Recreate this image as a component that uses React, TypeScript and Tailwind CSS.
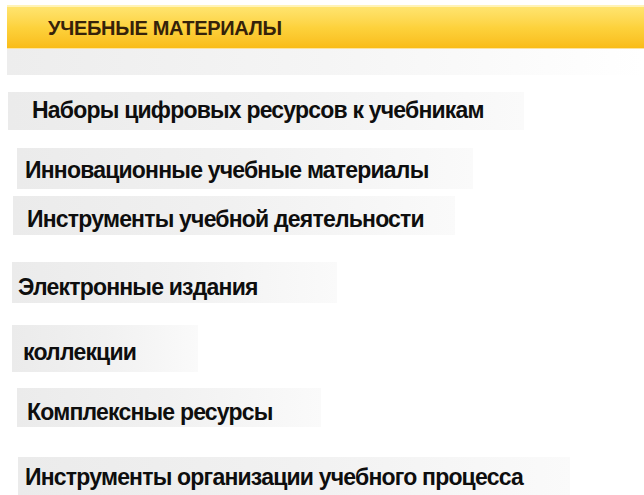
export default function App() {
  const items = [
    { text: "Наборы цифровых ресурсов к учебникам", box: "mt-[17px] ml-[8px] w-[516px] h-[38px] pt-[6px] pl-[24px]" },
    { text: "Инновационные учебные материалы", box: "mt-[18px] ml-[17px] w-[456px] h-[41px] pt-[10px] pl-[8px]" },
    { text: "Инструменты учебной деятельности", box: "mt-[7px] ml-[13px] w-[442px] h-[39px] pt-[11px] pl-[14px]" },
    { text: "Электронные издания", box: "mt-[27px] ml-[12px] w-[325px] h-[41px] pt-[13px] pl-[6px]" },
    { text: "коллекции", box: "mt-[22px] ml-[12px] w-[186px] h-[47px] pt-[15px] pl-[11px]" },
    { text: "Комплексные ресурсы", box: "mt-[16px] ml-[17px] w-[304px] h-[39px] pt-[12px] pl-[10px]" },
    { text: "Инструменты организации учебного процесса", box: "mt-[30px] ml-[18px] w-[552px] h-[38px] pt-[8px] pl-[7px]" },
  ];

  return (
    <div className="w-[644px] h-[495px] overflow-hidden bg-white font-['Liberation_Sans',Arial,sans-serif]">
      {/* section header bar */}
      <div className="pt-[5px] pl-[7px]">
        <div className="h-[2px] bg-[#fff3b8]" />
        <div className="h-[42px] pt-[10px] pl-[41px] bg-gradient-to-b from-[#ffe46e] via-[#fdd23c] to-[#f9bc16] border-b border-[#fde3a0]">
          <span className="block text-[20px] leading-[22px] font-bold text-[#35220a] tracking-[-0.3px]">
            УЧЕБНЫЕ МАТЕРИАЛЫ
          </span>
        </div>
        <div className="h-[26px] bg-gradient-to-r from-[#ededed] via-[#f5f5f5] to-white" />
      </div>

      {/* list of material groups */}
      <div className="flex flex-col">
        {items.map((it) => (
          <div
            key={it.text}
            className={`${it.box} bg-gradient-to-r from-[#ebebeb] via-[#f1f1f1] to-[#fafafa]`}
          >
            <span className="block whitespace-nowrap text-[23px] leading-[24px] font-bold text-[#0e0e0e] tracking-[-0.8px]">
              {it.text}
            </span>
          </div>
        ))}
      </div>
    </div>
  );
}
